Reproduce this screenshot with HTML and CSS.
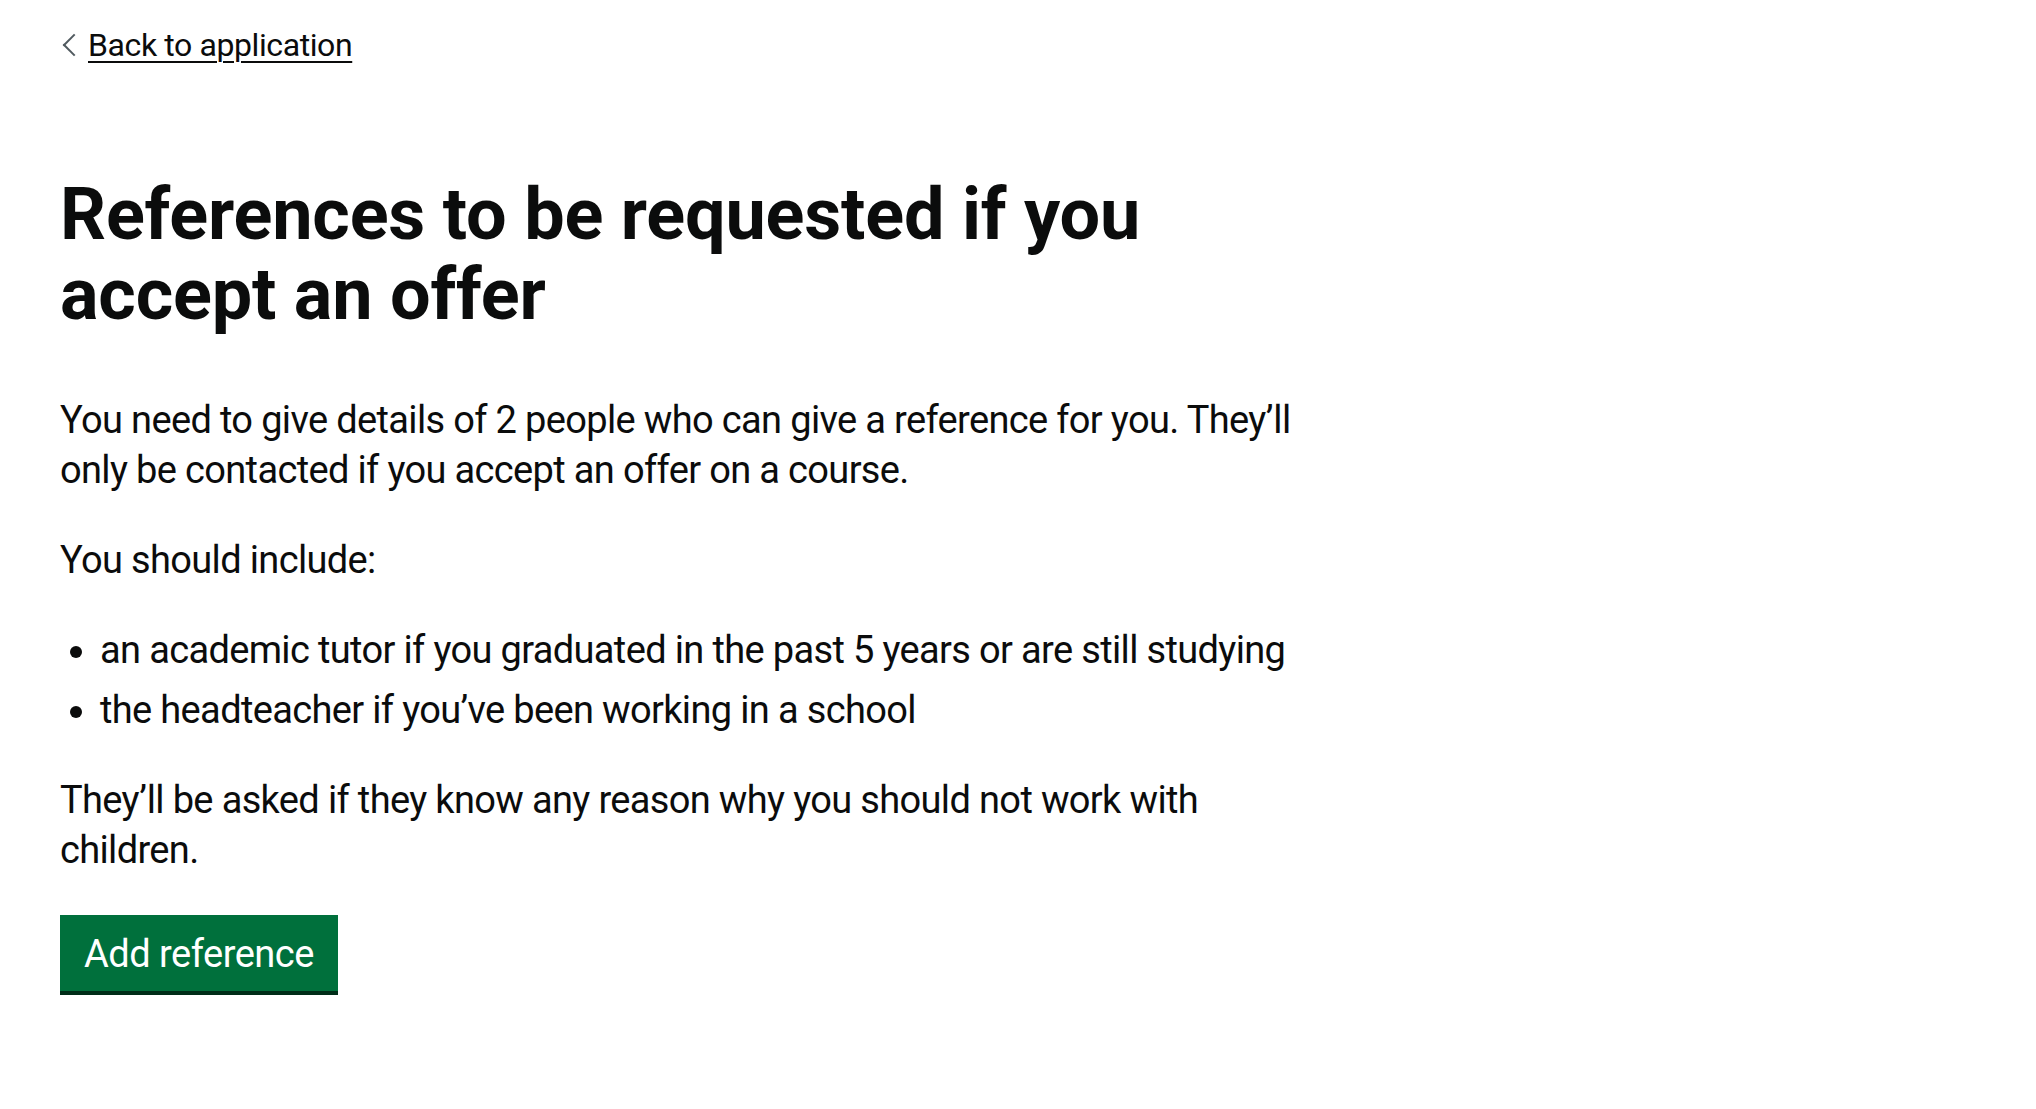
FILE: index.html
```html
<!DOCTYPE html>
<html lang="en">
<head>
<meta charset="utf-8">
<title>References to be requested if you accept an offer</title>
<link rel="stylesheet" href="styles.css">
</head>
<body class="page">
<div class="width-container">
  <a href="#" class="back-link">Back to application</a>
  <main class="main-wrapper">
    <div class="two-thirds">
      <h1 class="heading-l">References to be requested if you accept an offer</h1>
      <p class="body">You need to give details of 2 people who can give a reference for you. They’ll only be contacted if you accept an offer on a course.</p>
      <p class="body">You should include:</p>
      <ul class="list-bullet">
        <li>an academic tutor if you graduated in the past 5 years or are still studying</li>
        <li>the headteacher if you’ve been working in a school</li>
      </ul>
      <p class="body">They’ll be asked if they know any reason why you should not work with children.</p>
      <a href="#" class="button">Add reference</a>
    </div>
  </main>
</div>
</body>
</html>
```

FILE: styles.css
```css
html, body {
  margin: 0;
  padding: 0;
  background: #ffffff;
}

.page {
  font-family: Roboto, "Liberation Sans", sans-serif;
  color: #0b0c0c;
}

.width-container {
  padding: 0 60px;
}

.back-link {
  position: relative;
  display: inline-block;
  margin-top: 25px;
  margin-bottom: 30px;
  padding-left: 28px;
  font-size: 32px;
  line-height: 40px;
  letter-spacing: -0.4px;
  color: #0b0c0c;
  text-decoration: underline;
  text-decoration-thickness: 2px;
  text-underline-offset: 0.16em;
}

.back-link::before {
  content: "";
  position: absolute;
  top: 0;
  bottom: 0;
  left: 6px;
  width: 14px;
  height: 14px;
  margin: auto 0;
  transform: rotate(225deg);
  border-style: solid;
  border-color: #505a5f;
  border-width: 2px 2px 0 0;
}

.main-wrapper {
  display: block;
  padding-top: 80px;
  padding-bottom: 80px;
}

.two-thirds {
  width: 1257px;
}

.heading-l {
  margin: 0 0 60px;
  font-size: 72px;
  line-height: 80px;
  font-weight: 700;
  letter-spacing: -0.2px;
}

.body {
  margin: 0 0 40px;
  font-size: 38px;
  line-height: 50px;
  letter-spacing: -0.65px;
}

.list-bullet {
  margin: 0 0 40px;
  padding-left: 40px;
  font-size: 38px;
  line-height: 50px;
  letter-spacing: -0.65px;
  list-style-type: disc;
}

.list-bullet li {
  margin-bottom: 10px;
}

.list-bullet li:last-child {
  margin-bottom: 0;
}

.button {
  display: inline-block;
  box-sizing: border-box;
  padding: 16px 20px 14px;
  border: 4px solid transparent;
  background: #00703c;
  box-shadow: 0 4px 0 #002d18;
  color: #ffffff;
  font-size: 38px;
  line-height: 38px;
  letter-spacing: -0.5px;
  text-decoration: none;
}
```
